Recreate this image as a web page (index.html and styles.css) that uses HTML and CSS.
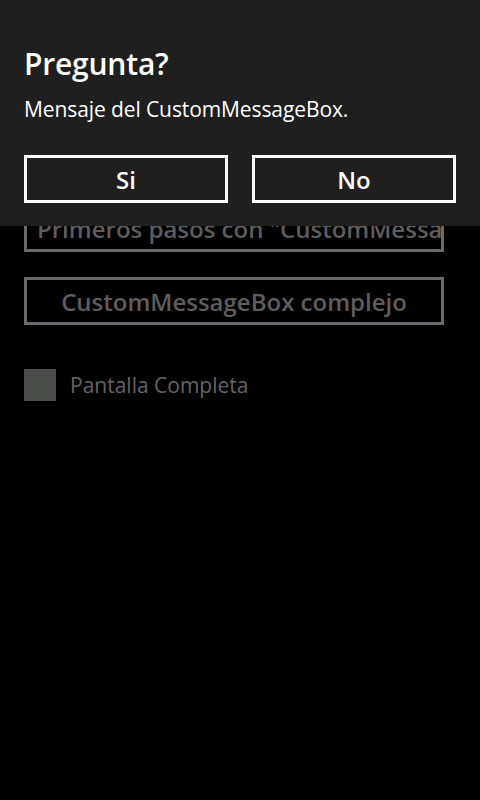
FILE: index.html
```html
<!DOCTYPE html>
<html lang="es">
<head>
<meta charset="utf-8">
<link rel="stylesheet" href="styles.css">
</head>
<body>
<main class="page">
  <button class="page-btn">Primeros pasos con "CustomMessageBox"</button>
  <button class="page-btn">CustomMessageBox complejo</button>
  <label class="check">
    <span class="box"></span>
    <span class="check-label">Pantalla Completa</span>
  </label>
</main>
<div class="dialog">
  <h1 class="title">Pregunta?</h1>
  <p class="message">Mensaje del CustomMessageBox.</p>
  <div class="actions">
    <button class="dlg-btn">Si</button>
    <button class="dlg-btn">No</button>
  </div>
</div>
</body>
</html>
```

FILE: styles.css
```css
* { box-sizing: border-box; }
html, body {
  margin: 0;
  padding: 0;
  width: 480px;
  height: 800px;
  background: #000;
  overflow: hidden;
  font-family: "Open Sans", "Noto Sans", sans-serif;
}
.page {
  padding: 204px 36px 0 24px;
  display: flex;
  flex-direction: column;
  gap: 25px;
}
.page-btn {
  height: 48px;
  width: 420px;
  background: transparent;
  border: 3px solid #6d686b;
  color: #5f5c5e;
  font-family: inherit;
  font-size: 24px;
  font-weight: 600;
  letter-spacing: 0;
  white-space: nowrap;
  overflow: hidden;
  padding: 0 10px;
  text-align: center;
}
.page-btn:first-child { text-align: left; }
.check {
  display: flex;
  align-items: center;
  gap: 14px;
  margin-top: 19px;
}
.box {
  width: 32px;
  height: 32px;
  background: #4b4d4b;
}
.check-label {
  color: #666366;
  font-size: 21px;
  letter-spacing: 0;
}
.dialog {
  position: absolute;
  top: 0;
  left: 0;
  width: 480px;
  height: 226px;
  background: #1f1f1f;
  padding: 44px 24px 0 24px;
}
.title {
  margin: 0;
  color: #fff;
  font-size: 30px;
  font-weight: 600;
  line-height: 40px;
  letter-spacing: -0.2px;
}
.message {
  margin: 11px 0 0 0;
  color: #fff;
  font-size: 21px;
  line-height: 28px;
  letter-spacing: -0.1px;
}
.actions {
  margin-top: 32px;
  display: flex;
  gap: 24px;
}
.dlg-btn {
  width: 204px;
  height: 48px;
  background: transparent;
  border: 3px solid #fff;
  color: #fff;
  font-family: inherit;
  font-size: 24px;
  font-weight: 600;
  padding: 0;
}
```
